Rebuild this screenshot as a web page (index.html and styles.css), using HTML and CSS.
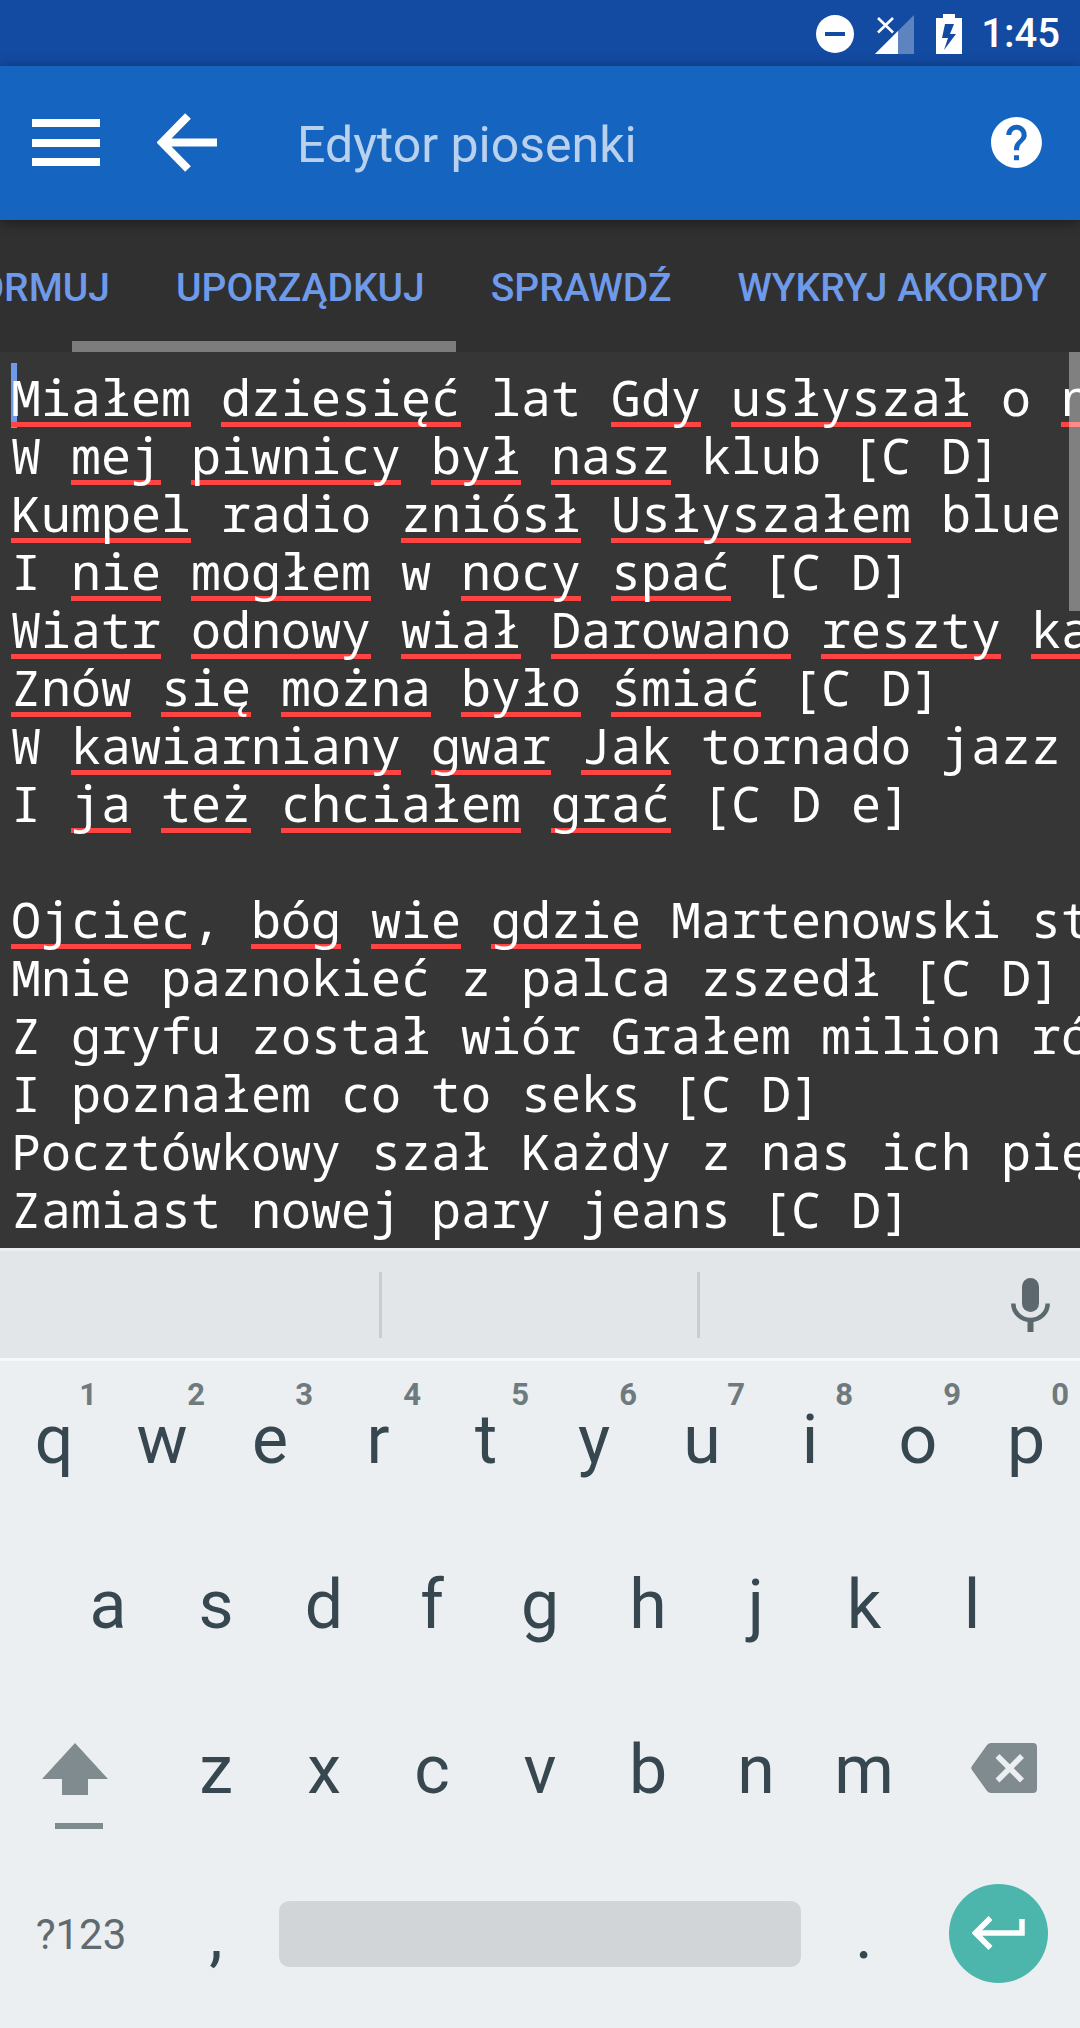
FILE: index.html
```html
<!DOCTYPE html>
<html lang="pl">
<head>
<meta charset="utf-8">
<meta name="viewport" content="width=device-width, initial-scale=1">
<title>Edytor piosenki</title>
<link rel="stylesheet" href="styles.css">
</head>
<body>
<div class="status-bar">
  <svg class="status-dnd" width="38" height="38" viewBox="0 0 38 38" aria-hidden="true"><path fill="#fff" fill-rule="evenodd" d="M19 0a19 19 0 1 0 0 38a19 19 0 1 0 0-38zM9 17h20v4H9z"/></svg>
  <svg class="status-signal" width="39" height="39" viewBox="0 0 39 39" aria-hidden="true"><path fill="#fff" fill-opacity=".32" d="M0 39L39 0v39z"/><path fill="#fff" d="M0 39l23-23v23z"/><path stroke="#fff" stroke-width="2.6" fill="none" d="M3 3l15 14.500M18 3L3 17.500"/></svg>
  <svg class="status-battery" width="26" height="40" viewBox="0 0 26 40" aria-hidden="true"><path fill="#fff" fill-rule="evenodd" d="M7 0h12v4h7v36H0V4h7zM9 10l-3 14h6l-4 12L20 20h-6l4-10z"/></svg>
  <span class="clock">1:45</span>
</div>

<header class="app-bar">
  <button class="icon-button" type="button" aria-label="Menu">
    <svg width="68" height="59" viewBox="0 0 68 59"><path fill="#fff" d="M0 6h69v8H0zM0 26h69v8H0zM0 45h69v8H0z"/></svg>
  </button>
  <button class="icon-button back-button" type="button" aria-label="Wstecz">
    <svg width="60" height="59" viewBox="0 0 60 59"><path fill="none" stroke="#fff" stroke-width="8" d="M31 3L5 29.500L31 56M5 29.500h55"/></svg>
  </button>
  <h1 class="title">Edytor piosenki</h1>
  <button class="icon-button" type="button" aria-label="Pomoc">
    <svg width="61" height="61" viewBox="0 0 24 24"><path fill="#fff" d="M12 2C6.480 2 2 6.480 2 12s4.480 10 10 10 10-4.480 10-10S17.520 2 12 2zm1 17h-2v-2h2v2zm2.070-7.750l-.9.920C13.450 12.900 13 13.500 13 15h-2v-.5c0-1.100.45-2.100 1.170-2.830l1.240-1.260c.37-.36.59-.86.59-1.410 0-1.100-.9-2-2-2s-2 .9-2 2H8c0-2.210 1.790-4 4-4s4 1.790 4 4c0 .88-.36 1.680-.93 2.250z"/></svg>
  </button>
</header>

<nav class="actions" aria-label="Narzędzia">
  <button class="action" type="button">TRANSFORMUJ</button>
  <button class="action" type="button">UPORZĄDKUJ</button>
  <button class="action" type="button">SPRAWDŹ</button>
  <button class="action" type="button">WYKRYJ AKORDY</button>
  <span class="scroll-x" aria-hidden="true"></span>
</nav>

<main class="editor">
  <div class="marks" id="marks" aria-hidden="true"></div>
  <textarea class="song" id="song" wrap="off" spellcheck="false" aria-label="Tekst piosenki">Miałem dziesięć lat Gdy usłyszał o nim
W mej piwnicy był nasz klub [C D]
Kumpel radio zniósł Usłyszałem blue
I nie mogłem w nocy spać [C D]
Wiatr odnowy wiał Darowano reszty kar
Znów się można było śmiać [C D]
W kawiarniany gwar Jak tornado jazz
I ja też chciałem grać [C D e]

Ojciec, bóg wie gdzie Martenowski stawiał
Mnie paznokieć z palca zszedł [C D]
Z gryfu został wiór Grałem milion różnych
I poznałem co to seks [C D]
Pocztówkowy szał Każdy z nas ich pięćset
Zamiast nowej pary jeans [C D]</textarea>
  <span class="scroll-y" aria-hidden="true"></span>
</main>

<section class="keyboard" aria-label="Klawiatura">
  <div class="suggestions">
    <span class="suggestion"></span>
    <span class="suggestion"></span>
    <span class="suggestion voice">
      <button class="icon-button" type="button" aria-label="Mowa">
        <svg width="39" height="54" viewBox="0 0 39 54"><rect x="11" y="0" width="17" height="34" rx="8.500" fill="#5c686e"/><path fill="none" stroke="#5c686e" stroke-width="4.500" d="M2.300 25.500a17.200 16.500 0 0 0 34.400 0"/><path fill="#5c686e" d="M16.500 42h6v12h-6z"/></svg>
      </button>
    </span>
  </div>
  <div class="keys">
    <button class="key" type="button">q<span class="hint">1</span></button>
    <button class="key" type="button">w<span class="hint">2</span></button>
    <button class="key" type="button">e<span class="hint">3</span></button>
    <button class="key" type="button">r<span class="hint">4</span></button>
    <button class="key" type="button">t<span class="hint">5</span></button>
    <button class="key" type="button">y<span class="hint">6</span></button>
    <button class="key" type="button">u<span class="hint">7</span></button>
    <button class="key" type="button">i<span class="hint">8</span></button>
    <button class="key" type="button">o<span class="hint">9</span></button>
    <button class="key" type="button">p<span class="hint">0</span></button>

    <button class="key key-indent" type="button">a</button>
    <button class="key" type="button">s</button>
    <button class="key" type="button">d</button>
    <button class="key" type="button">f</button>
    <button class="key" type="button">g</button>
    <button class="key" type="button">h</button>
    <button class="key" type="button">j</button>
    <button class="key" type="button">k</button>
    <button class="key" type="button">l</button>

    <button class="key key-wide key-shift" type="button" aria-label="Shift">
      <svg width="66" height="86" viewBox="0 0 66 86"><path fill="#808b8f" d="M33 0l33 36H46v16H20V36H0zM13 80h48v6H13z"/></svg>
    </button>
    <button class="key" type="button">z</button>
    <button class="key" type="button">x</button>
    <button class="key" type="button">c</button>
    <button class="key" type="button">v</button>
    <button class="key" type="button">b</button>
    <button class="key" type="button">n</button>
    <button class="key" type="button">m</button>
    <button class="key key-wide key-delete" type="button" aria-label="Usuń">
      <svg width="66" height="50" viewBox="0 0 66 50"><path fill="#808b8f" d="M20 0h42q4 0 4 4v42q0 4-4 4H20q-2.500 0-4-2L1 27q-1.500-2 0-4L16 2q1.500-2 4-2z"/><path fill="none" stroke="#ebeff2" stroke-width="5.600" d="M26.500 13L51 37.500M51 13L26.500 37.500"/></svg>
    </button>

    <button class="key key-wide key-symbols" type="button">?123</button>
    <button class="key" type="button">,</button>
    <button class="key key-space" type="button" aria-label="Spacja"><span class="space-bar"></span></button>
    <button class="key" type="button">.</button>
    <button class="key key-wide" type="button" aria-label="Enter">
      <span class="enter">
        <svg width="53" height="34" viewBox="0 0 53 34"><path fill="none" stroke="#fff" stroke-width="5.500" d="M18.500 2L3.500 17l15 15M3.500 17H50V3"/></svg>
      </span>
    </button>
  </div>
</section>
<script src="editor.js"></script>
</body>
</html>
```
FILE: styles.css
```css
* {
  box-sizing: border-box;
}

body {
  margin: 0;
  height: 100vh;
  display: flex;
  flex-direction: column;
  overflow: hidden;
  background: #303030;
  font-family: Roboto, "Liberation Sans", sans-serif;
}

button {
  margin: 0;
  padding: 0;
  border: 0;
  background: none;
  font: inherit;
  color: inherit;
}

svg {
  display: block;
}

/* Status bar */
.status-bar {
  flex: none;
  height: 66px;
  padding: 2px 20px 0 0;
  display: flex;
  align-items: center;
  justify-content: flex-end;
  background: #134ba2;
  color: #fff;
}

.status-signal {
  margin-left: 21px;
}

.status-battery {
  margin-left: 22px;
}

.clock {
  margin-left: 19px;
  font-size: 40px;
  font-weight: 500;
  line-height: 48px;
}

/* App bar */
.app-bar {
  position: relative;
  z-index: 1;
  flex: none;
  height: 154px;
  padding: 0 33px 2px 32px;
  display: flex;
  align-items: center;
  background: #1565c0;
  box-shadow: 0 2px 12px rgba(0, 0, 0, .45);
}

.back-button {
  margin-left: 57px;
}

.title {
  flex: 1;
  margin: 0 0 0 80px;
  padding-top: 6px;
  color: rgba(255, 255, 255, .7);
  font-size: 50px;
  font-weight: 400;
  line-height: 60px;
}

/* Actions */
.actions {
  position: relative;
  flex: none;
  height: 132px;
  display: flex;
  justify-content: flex-end;
  overflow: hidden;
}

.action {
  flex: none;
  padding: 4px 33px 0;
  color: #6f9aea;
  font-size: 39px;
  font-weight: 500;
  white-space: nowrap;
}

.scroll-x {
  position: absolute;
  left: 72px;
  bottom: 0;
  width: 384px;
  height: 11px;
  background: #7c7c7c;
}

/* Editor */
.editor {
  position: relative;
  flex: 1;
  min-height: 0;
  display: grid;
  overflow: hidden;
  background: #363636;
}

.marks,
.song {
  grid-area: 1 / 1;
  padding: 17px 0 0 11px;
  font-family: "Noto Sans Mono", "Droid Sans Mono", "DejaVu Sans Mono", monospace;
  font-size: 50px;
  line-height: 58px;
}

.song {
  width: 100%;
  height: 100%;
  margin: 0;
  padding-top: 16px;
  border: 0;
  outline: 0;
  resize: none;
  overflow: hidden;
  white-space: pre;
  background: none;
  color: #fff;
  z-index: 1;
}

.mark-row {
  position: relative;
  height: 58px;
}

.mark {
  position: absolute;
  bottom: 0;
  height: 5px;
  background: #ff4444;
}

.caret {
  position: absolute;
  left: 0;
  bottom: -1px;
  width: 6px;
  height: 65px;
  background: #6f9aea;
}

.scroll-y {
  position: absolute;
  top: 0;
  right: 0;
  z-index: 2;
  width: 11px;
  height: 259px;
  background: rgba(255, 255, 255, .37);
}

/* Keyboard */
.keyboard {
  flex: none;
  background: #ebeff2;
  color: #37474f;
}

.suggestions {
  height: 113px;
  padding-left: 2px;
  display: grid;
  grid-template-columns: 6fr 5fr 6fr;
  align-items: center;
  border-top: 3px solid #ebeff2;
  border-bottom: 3px solid #f5f7f8;
  background: #e2e6e9;
}

.suggestion {
  height: 66px;
  border-right: 3px solid #c9cdd0;
}

.voice {
  display: flex;
  align-items: center;
  justify-content: flex-end;
  padding-right: 30px;
  border-right: 0;
}

.keys {
  display: grid;
  grid-template-columns: repeat(20, 1fr);
  grid-auto-rows: 165px;
  padding-bottom: 7px;
}

.key {
  position: relative;
  grid-column: span 2;
  padding-bottom: 7px;
  display: flex;
  align-items: center;
  justify-content: center;
  font-size: 68px;
  line-height: 80px;
}

.key-indent {
  grid-column: 2 / span 2;
}

.key-wide {
  grid-column: span 3;
}

.key-space {
  grid-column: span 10;
}

.hint {
  position: absolute;
  top: 16px;
  right: 11px;
  color: #6f7a7f;
  font-size: 31px;
  font-weight: 700;
  line-height: 36px;
}

.key-shift {
  padding: 24px 12px 0 0;
}

.key-delete {
  padding: 0 0 11px 10px;
}

.key-symbols {
  color: #5f6b70;
  font-size: 42px;
}

.space-bar {
  flex: 1;
  height: 66px;
  margin: 0 9px 2px;
  border-radius: 10px;
  background: #d1d5d8;
}

.enter {
  width: 99px;
  height: 99px;
  margin: 0 2px 4px 0;
  display: flex;
  align-items: center;
  justify-content: center;
  border-radius: 50%;
  background: #4db6ac;
}
```
FILE: editor.js
```js
// Words the spell checker flags in the visible part of the song.
const flagged = new Set(("Miałem dziesięć Gdy usłyszał nim mej piwnicy był nasz Kumpel zniósł " +
  "Usłyszałem nie mogłem nocy spać Wiatr odnowy wiał Darowano reszty kar Znów się można było śmiać " +
  "kawiarniany gwar Jak ja też chciałem grać Ojciec bóg wie gdzie").split(" "));

const song = document.getElementById("song");
const marks = document.getElementById("marks");

song.value.split("\n").forEach((line, index) => {
  const row = document.createElement("div");
  row.className = "mark-row";
  if (index === 0) {
    const caret = document.createElement("span");
    caret.className = "caret";
    row.append(caret);
  }
  for (const match of line.matchAll(/\p{L}+/gu)) {
    if (!flagged.has(match[0])) continue;
    const mark = document.createElement("span");
    mark.className = "mark";
    mark.style.left = match.index + "ch";
    mark.style.width = match[0].length + "ch";
    row.append(mark);
  }
  marks.append(row);
});
```
